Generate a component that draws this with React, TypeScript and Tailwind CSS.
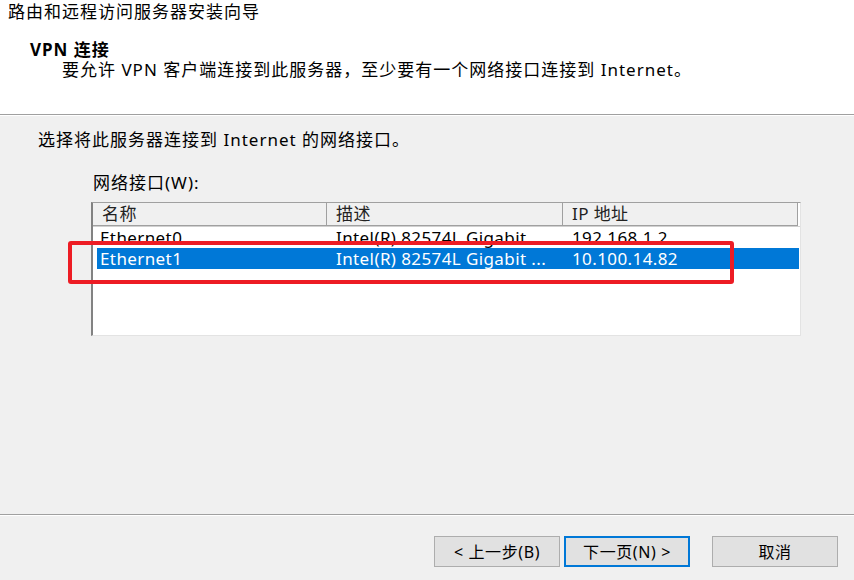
import React from "react";

type Iface = { name: string; desc: string; ip: string };

const ifaces: Iface[] = [
  { name: "Ethernet0", desc: "Intel(R) 82574L Gigabit ...", ip: "192.168.1.2" },
  { name: "Ethernet1", desc: "Intel(R) 82574L Gigabit ...", ip: "10.100.14.82" },
];

const FONT = "font-['Noto_Sans','Noto_Sans_CJK_SC',sans-serif]";

function WizButton({ label, primary = false }: { label: string; primary?: boolean }) {
  return (
    <button
      className={`h-[31px] w-[126px] bg-[#e1e1e1] text-[16px] leading-none tracking-[0.6px] text-black ${
        primary ? "border-2 border-[#0078d7]" : "border border-[#adadad]"
      }`}
    >
      {label}
    </button>
  );
}

export default function App() {
  const selected = 1;

  return (
    <div className={`relative flex h-[580px] w-[854px] flex-col overflow-hidden bg-[#f0f0f0] ${FONT} text-[17px] tracking-[1px] text-black`}>
      {/* header band */}
      <div className="h-[115px] shrink-0 border-b border-[#a0a0a0] bg-white">
        <div className="pl-[8px] pt-[2px] leading-[20px]">路由和远程访问服务器安装向导</div>
        <div className="pl-[30px] pt-[18px] font-bold leading-[20px]">VPN 连接</div>
        <div className="pl-[62px] leading-[20px]">
          要允许 VPN 客户端连接到此服务器，至少要有一个网络接口连接到 Internet。
        </div>
      </div>

      {/* body */}
      <div className="flex-1 border-t border-white">
        <div className="pl-[38px] pt-[14px] leading-[20px]">选择将此服务器连接到 Internet 的网络接口。</div>
        <div className="pl-[93px] pt-[23px] leading-[20px]">网络接口(W):</div>

        <div className="ml-[91px] mt-[9px] h-[134px] w-[710px] border-l-2 border-t border-r border-b border-l-[#828282] border-t-[#a0a0a0] border-r-[#e3e3e3] border-b-[#e3e3e3] bg-white tracking-[0.4px]">
          <div className="flex h-[24px] border-b border-[#d0d0d0]">
            {["名称", "描述", "IP 地址"].map((h, i) => (
              <div
                key={h}
                className={`flex items-center border-b border-r border-[#a0a0a0] bg-[#f0f0f0] pl-[9px] text-[#222] ${
                  i === 0 ? "w-[234px]" : i === 1 ? "w-[236px]" : "w-[235px]"
                }`}
              >
                {h}
              </div>
            ))}
          </div>
          {ifaces.map((r, i) => (
            <div
              key={r.name}
              className={`ml-[4px] mr-[1px] flex h-[21px] items-center whitespace-nowrap leading-[20px] ${
                i === selected ? "bg-[#0078d7] text-white" : "text-black"
              }`}
            >
              <span className="w-[238px] shrink-0 pl-[3px]">{r.name}</span>
              <span className="w-[236px] shrink-0 pl-[1px]">{r.desc}</span>
              <span className="pl-[1px]">{r.ip}</span>
            </div>
          ))}
        </div>
      </div>

      {/* footer */}
      <div className="h-[66px] shrink-0 border-t border-[#a0a0a0]">
        <div className="flex border-t border-white pr-[16px] pt-[20px]">
          <div className="ml-auto flex gap-[4px]">
            <WizButton label="< 上一步(B)" />
            <WizButton label="下一页(N) >" primary />
          </div>
          <div className="ml-[22px]">
            <WizButton label="取消" />
          </div>
        </div>
      </div>

      {/* red highlight annotation */}
      <div className="absolute left-[68px] top-[241px] h-[43px] w-[666px] rounded-[3px] border-4 border-[#ed1c24]" />
    </div>
  );
}
